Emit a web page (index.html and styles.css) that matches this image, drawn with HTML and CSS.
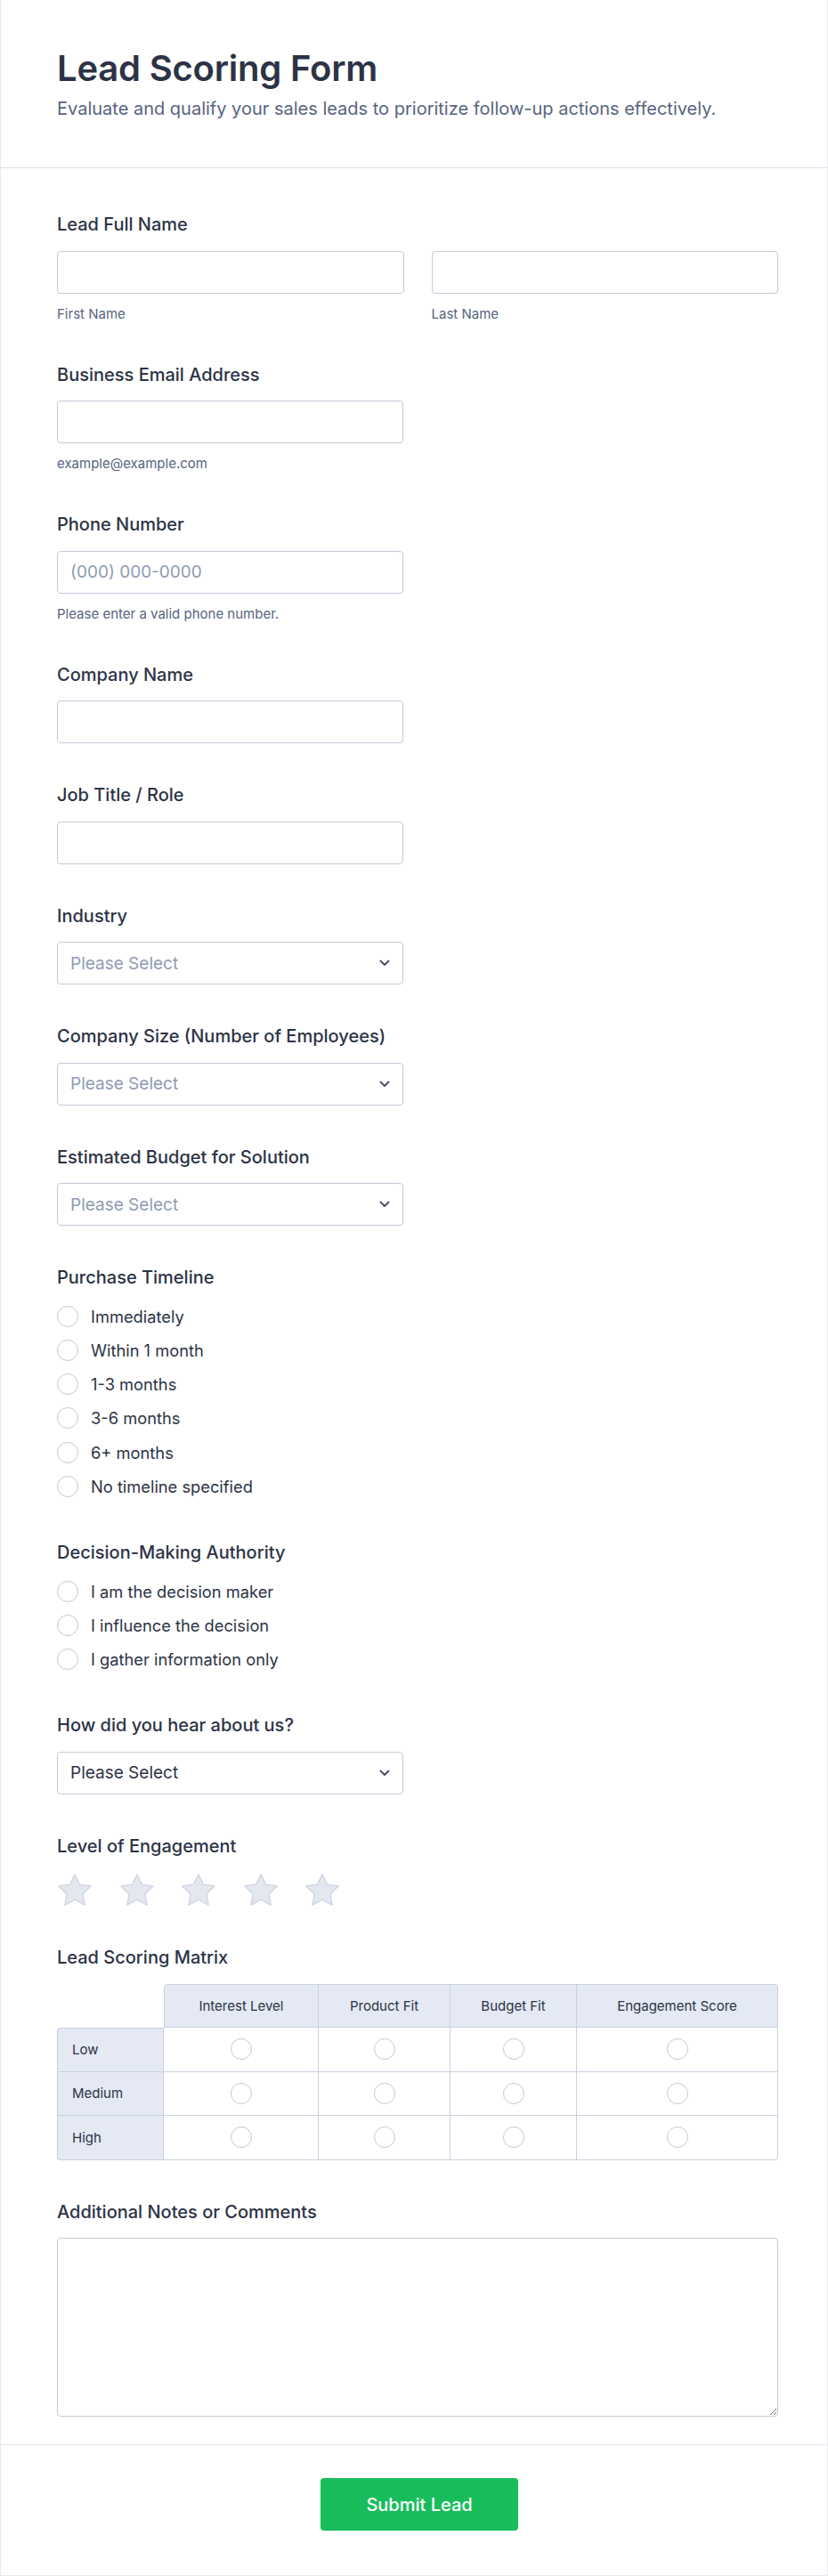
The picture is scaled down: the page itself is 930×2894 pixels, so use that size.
FILE: index.html
```html
<!DOCTYPE html>
<html lang="en">
<head>
<meta charset="utf-8">
<title>Lead Scoring Form</title>
<link rel="stylesheet" href="styles.css">
</head>
<body>
<div class="card">
  <header class="form-header">
    <h1 class="title">Lead Scoring Form</h1>
    <p class="subtitle">Evaluate and qualify your sales leads to prioritize follow-up actions effectively.</p>
  </header>

  <form class="form-body">
    <div class="field">
      <label class="label">Lead Full Name</label>
      <div class="two-col">
        <div>
          <input class="input" type="text">
          <div class="sublabel">First Name</div>
        </div>
        <div>
          <input class="input" type="text">
          <div class="sublabel">Last Name</div>
        </div>
      </div>
    </div>

    <div class="field">
      <label class="label">Business Email Address</label>
      <input class="input half" type="email">
      <div class="sublabel">example@example.com</div>
    </div>

    <div class="field">
      <label class="label">Phone Number</label>
      <input class="input half" type="tel" placeholder="(000) 000-0000">
      <div class="sublabel">Please enter a valid phone number.</div>
    </div>

    <div class="field">
      <label class="label">Company Name</label>
      <input class="input half" type="text">
    </div>

    <div class="field">
      <label class="label">Job Title / Role</label>
      <input class="input half" type="text">
    </div>

    <div class="field">
      <label class="label">Industry</label>
      <div class="select half">
        <span class="select-text placeholder">Please Select</span>
        <svg class="chevron" width="12" height="8" viewBox="0 0 12 8"><path d="M1.5 1.5 6 6l4.5-4.5" fill="none" stroke="#4b5468" stroke-width="2" stroke-linecap="round" stroke-linejoin="round"/></svg>
      </div>
    </div>

    <div class="field">
      <label class="label">Company Size (Number of Employees)</label>
      <div class="select half">
        <span class="select-text placeholder">Please Select</span>
        <svg class="chevron" width="12" height="8" viewBox="0 0 12 8"><path d="M1.5 1.5 6 6l4.5-4.5" fill="none" stroke="#4b5468" stroke-width="2" stroke-linecap="round" stroke-linejoin="round"/></svg>
      </div>
    </div>

    <div class="field">
      <label class="label">Estimated Budget for Solution</label>
      <div class="select half">
        <span class="select-text placeholder">Please Select</span>
        <svg class="chevron" width="12" height="8" viewBox="0 0 12 8"><path d="M1.5 1.5 6 6l4.5-4.5" fill="none" stroke="#4b5468" stroke-width="2" stroke-linecap="round" stroke-linejoin="round"/></svg>
      </div>
    </div>

    <div class="field">
      <label class="label">Purchase Timeline</label>
      <div class="options">
        <div class="option"><span class="radio"></span>Immediately</div>
        <div class="option"><span class="radio"></span>Within 1 month</div>
        <div class="option"><span class="radio"></span>1-3 months</div>
        <div class="option"><span class="radio"></span>3-6 months</div>
        <div class="option"><span class="radio"></span>6+ months</div>
        <div class="option"><span class="radio"></span>No timeline specified</div>
      </div>
    </div>

    <div class="field">
      <label class="label">Decision-Making Authority</label>
      <div class="options">
        <div class="option"><span class="radio"></span>I am the decision maker</div>
        <div class="option"><span class="radio"></span>I influence the decision</div>
        <div class="option"><span class="radio"></span>I gather information only</div>
      </div>
    </div>

    <div class="field">
      <label class="label">How did you hear about us?</label>
      <div class="select half">
        <span class="select-text">Please Select</span>
        <svg class="chevron" width="12" height="8" viewBox="0 0 12 8"><path d="M1.5 1.5 6 6l4.5-4.5" fill="none" stroke="#4b5468" stroke-width="2" stroke-linecap="round" stroke-linejoin="round"/></svg>
      </div>
    </div>

    <div class="field">
      <label class="label">Level of Engagement</label>
      <div class="stars">
        <svg class="star" width="38" height="36" viewBox="1.5 1.5 21 20"><polygon points="12,2 15.09,8.26 22,9.27 17,14.14 18.18,21.02 12,17.77 5.82,21.02 7,14.14 2,9.27 8.91,8.26" fill="#e3e7f0" stroke="#cdd3e1" stroke-width="0.7" stroke-linejoin="round"/></svg>
        <svg class="star" width="38" height="36" viewBox="1.5 1.5 21 20"><polygon points="12,2 15.09,8.26 22,9.27 17,14.14 18.18,21.02 12,17.77 5.82,21.02 7,14.14 2,9.27 8.91,8.26" fill="#e3e7f0" stroke="#cdd3e1" stroke-width="0.7" stroke-linejoin="round"/></svg>
        <svg class="star" width="38" height="36" viewBox="1.5 1.5 21 20"><polygon points="12,2 15.09,8.26 22,9.27 17,14.14 18.18,21.02 12,17.77 5.82,21.02 7,14.14 2,9.27 8.91,8.26" fill="#e3e7f0" stroke="#cdd3e1" stroke-width="0.7" stroke-linejoin="round"/></svg>
        <svg class="star" width="38" height="36" viewBox="1.5 1.5 21 20"><polygon points="12,2 15.09,8.26 22,9.27 17,14.14 18.18,21.02 12,17.77 5.82,21.02 7,14.14 2,9.27 8.91,8.26" fill="#e3e7f0" stroke="#cdd3e1" stroke-width="0.7" stroke-linejoin="round"/></svg>
        <svg class="star" width="38" height="36" viewBox="1.5 1.5 21 20"><polygon points="12,2 15.09,8.26 22,9.27 17,14.14 18.18,21.02 12,17.77 5.82,21.02 7,14.14 2,9.27 8.91,8.26" fill="#e3e7f0" stroke="#cdd3e1" stroke-width="0.7" stroke-linejoin="round"/></svg>
      </div>
    </div>

    <div class="field">
      <label class="label">Lead Scoring Matrix</label>
      <div class="matrix">
        <div class="m-corner"></div>
        <div class="m-head first">Interest Level</div>
        <div class="m-head">Product Fit</div>
        <div class="m-head">Budget Fit</div>
        <div class="m-head last">Engagement Score</div>

        <div class="m-row top">Low</div>
        <div class="m-cell"><span class="radio"></span></div>
        <div class="m-cell"><span class="radio"></span></div>
        <div class="m-cell"><span class="radio"></span></div>
        <div class="m-cell"><span class="radio"></span></div>

        <div class="m-row">Medium</div>
        <div class="m-cell"><span class="radio"></span></div>
        <div class="m-cell"><span class="radio"></span></div>
        <div class="m-cell"><span class="radio"></span></div>
        <div class="m-cell"><span class="radio"></span></div>

        <div class="m-row bottom">High</div>
        <div class="m-cell"><span class="radio"></span></div>
        <div class="m-cell"><span class="radio"></span></div>
        <div class="m-cell"><span class="radio"></span></div>
        <div class="m-cell br"><span class="radio"></span></div>
      </div>
    </div>

    <div class="field">
      <label class="label">Additional Notes or Comments</label>
      <textarea class="textarea"></textarea>
    </div>
  </form>

  <footer class="form-footer">
    <button class="submit" type="button">Submit Lead</button>
  </footer>
</div>
</body>
</html>
```

FILE: styles.css
```css
* { box-sizing: border-box; }

html, body {
  margin: 0;
  padding: 0;
  background: #ffffff;
}

body {
  font-family: Inter, "Noto Sans", "Liberation Sans", sans-serif;
  color: #2c3345;
}

.card {
  width: 930px;
  min-height: 2894px;
  border-left: 1px solid #e6e9f0;
  border-right: 1px solid #e6e9f0;
  border-bottom: 1px solid #e6e9f0;
  background: #fff;
}

.form-header {
  padding: 53px 63px 51px;
  border-bottom: 1px solid #d8dde9;
}

.title {
  margin: 0;
  font-size: 40px;
  line-height: 48px;
  font-weight: 600;
  color: #2c3345;
  letter-spacing: -0.2px;
}

.subtitle {
  margin: 6px 0 0;
  font-size: 20px;
  line-height: 30px;
  color: #57647e;
}

.form-body {
  padding: 49px 55px 31px 63px;
  display: flex;
  flex-direction: column;
  gap: 44px;
}

.field {
  display: flex;
  flex-direction: column;
  align-items: flex-start;
}

.label {
  display: block;
  font-size: 20px;
  line-height: 28px;
  font-weight: 500;
  color: #2c3345;
  margin-bottom: 15.5px;
}

.two-col {
  display: grid;
  grid-template-columns: 1fr 1fr;
  column-gap: 31px;
  width: 100%;
}

.input {
  display: block;
  width: 100%;
  height: 48px;
  border: 1px solid #c3cad8;
  border-radius: 4px;
  padding: 0 14px;
  font-family: inherit;
  font-size: 19px;
  color: #2c3345;
  background: #fff;
  outline: none;
}

.input::placeholder {
  color: #8f9bb3;
}

.half {
  width: 389px;
}

.sublabel {
  margin-top: 13px;
  font-size: 15px;
  line-height: 20px;
  color: #57647e;
}

.select {
  position: relative;
  height: 48px;
  border: 1px solid #c3cad8;
  border-radius: 4px;
  padding: 0 14px;
  display: flex;
  align-items: center;
  background: #fff;
}

.select-text {
  font-size: 19px;
  color: #2c3345;
}

.select-text.placeholder {
  color: #8f9bb3;
}

.chevron {
  position: absolute;
  right: 14px;
  top: 50%;
  margin-top: -4px;
}

.options {
  display: flex;
  flex-direction: column;
  gap: 6.33px;
  margin-top: -2px;
}

.option {
  display: flex;
  align-items: center;
  height: 32px;
  font-size: 18.3px;
  color: #2c3345;
}

.radio {
  display: inline-block;
  width: 24px;
  height: 24px;
  border: 1.5px solid #c3cad8;
  border-radius: 50%;
  background: #fff;
  flex: none;
}

.option .radio {
  margin-right: 14px;
}

.stars {
  display: flex;
  gap: 31.5px;
  margin-top: 2px;
  padding-left: 1px;
}

.star {
  display: block;
}

.matrix {
  display: grid;
  grid-template-columns: 120px 174px 148px 142px 226px;
  grid-template-rows: 49px 50px 49px 50px;
  width: 810px;
  font-size: 15px;
  color: #2c3345;
}

.m-corner {
  background: transparent;
}

.m-head {
  display: flex;
  align-items: center;
  justify-content: center;
  background: #e4e9f4;
  border-top: 1px solid #c9d0de;
  border-right: 1px solid #c9d0de;
  border-bottom: 1px solid #c9d0de;
}

.m-head.first {
  border-left: 1px solid #c9d0de;
  border-top-left-radius: 4px;
}

.m-head.last {
  border-top-right-radius: 4px;
}

.m-row {
  display: flex;
  align-items: center;
  padding-left: 16px;
  background: #e4e9f4;
  border-left: 1px solid #c9d0de;
  border-right: 1px solid #c9d0de;
  border-bottom: 1px solid #c9d0de;
}

.m-row.top {
  border-top: 1px solid #c9d0de;
  border-top-left-radius: 4px;
}

.m-row.bottom {
  border-bottom-left-radius: 4px;
}

.m-cell {
  display: flex;
  align-items: center;
  justify-content: center;
  border-right: 1px solid #c9d0de;
  border-bottom: 1px solid #c9d0de;
  background: #fff;
}

.m-cell.br {
  border-bottom-right-radius: 4px;
}

.textarea {
  display: block;
  width: 100%;
  height: 201px;
  border: 1px solid #c3cad8;
  border-radius: 4px;
  padding: 10px 14px;
  font-family: inherit;
  font-size: 18px;
  resize: vertical;
  outline: none;
}

.form-footer {
  border-top: 1px solid #e3e6ee;
  padding: 37px 0 49px;
  display: flex;
  justify-content: center;
}

.submit {
  width: 222px;
  height: 59px;
  margin-left: 12px;
  border: none;
  border-radius: 4px;
  background: #18bd5b;
  color: #fff;
  font-family: inherit;
  font-size: 20px;
  font-weight: 500;
  cursor: pointer;
}
```
